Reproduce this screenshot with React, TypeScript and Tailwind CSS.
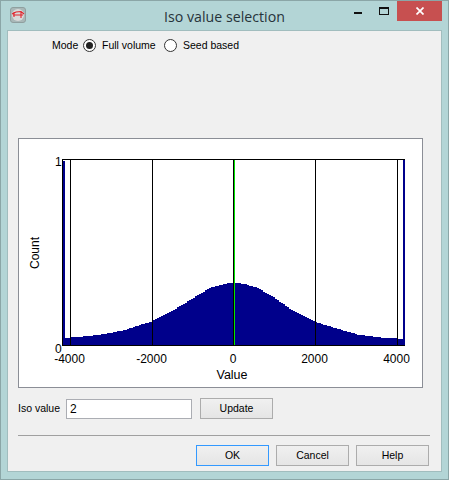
import React from 'react';

const table: [number, number][] = [
  [64, 7], [70, 7.5], [90, 9], [110, 12], [125, 15], [143, 21], [152, 23.5], [177, 37], [195, 48], [210, 57], [227, 61.5], [234, 62.5], [245, 61], [258, 57], [275, 47], [292, 35], [315, 23], [342, 15], [358, 10.5], [382, 7.5], [405, 6],
];

function heightAt(x: number): number {
  for (let i = 0; i < table.length - 1; i++) {
    const [a, ha] = table[i];
    const [b, hb] = table[i + 1];
    if (x >= a && x <= b) return ha + ((hb - ha) * (x - a)) / (b - a);
  }
  return 6;
}

function histPath(): string {
  const base = 345;
  let d = `M65 ${base}`;
  for (let x = 65; x < 405; x += 2) {
    const y = Math.round(base - heightAt(x + 1));
    d += ` L${x} ${y} L${x + 2} ${y}`;
  }
  return d + ` L405 ${base} Z`;
}

function Radio({ checked }: { checked?: boolean }) {
  return (
    <span className="w-[13px] h-[13px] rounded-full border border-[#333] bg-white flex items-center justify-center shrink-0">
      {checked && <span className="w-[7px] h-[7px] rounded-full bg-[#222]" />}
    </span>
  );
}

function Btn({ label, focus }: { label: string; focus?: boolean }) {
  return (
    <button
      className={`w-[73px] h-[21px] text-[10.5px] text-black bg-gradient-to-b from-[#f0f0f0] to-[#e5e5e5] border flex items-center justify-center ${focus ? 'border-[#3399ff]' : 'border-[#acacac]'}`}
    >
      {label}
    </button>
  );
}

function Chart() {
  const grid = [62, 70, 152, 233, 315, 397];
  const labels: [number, string][] = [[69.5, '-4000'], [151.5, '-2000'], [233, '0'], [314.5, '2000'], [396.5, '4000']];
  return (
    <svg className="block w-[403px] h-[248px]" viewBox="19 139 403 248" fontFamily="'Liberation Sans', Arial, sans-serif" fontSize="12" fill="#000">
      <g shapeRendering="crispEdges">
        <path d={histPath()} fill="#00008b" />
        <rect x="63" y="161" width="2" height="185" fill="#00008b" />
        <rect x="403" y="160" width="2" height="186" fill="#00008b" />
        {grid.map((x) => (
          <rect key={x} x={x} y="159" width="1" height="187" fill="#000" />
        ))}
        <rect x="234" y="160" width="1" height="185" fill="#00e600" />
        <rect x="62" y="159" width="343" height="1" fill="#000" />
        <rect x="62" y="345" width="343" height="1" fill="#000" />
      </g>
      <text x="55" y="166">1</text>
      <text x="55" y="353">0</text>
      {labels.map(([x, t]) => (
        <text key={t} x={x} y="363" textAnchor="middle">{t}</text>
      ))}
      <text x="232" y="379" textAnchor="middle" fontSize="12.5">Value</text>
      <text x="39" y="253" textAnchor="middle" transform="rotate(-90 39 253)">Count</text>
    </svg>
  );
}

export default function App() {
  return (
    <div className="w-[449px] h-[480px] bg-[#b3d5d6] border border-[#8ba6a7] flex flex-col font-['Liberation_Sans',Arial,sans-serif] text-[10.5px] text-black overflow-hidden">
      <div className="h-[29px] shrink-0 grid grid-cols-[1fr_auto_1fr]">
        <div className="flex pl-[9px] pt-[6px]">
          <svg width="16" height="16" viewBox="0 0 16 16">
            <rect x="0.5" y="0.5" width="15" height="15" rx="2.5" fill="#a9b8b8" stroke="#8f9f9f" />
            <circle cx="8" cy="8" r="6" fill="#d9d9d9" />
            <path d="M2 7 L6 5 L11 4.5 L14 7 M4 5 V10 M11 5 V11 M3 8 H13" fill="none" stroke="#e0242c" strokeWidth="1.1" />
          </svg>
        </div>
        <div className="font-['Open_Sans',sans-serif] text-[14.2px] text-[#27333a] leading-[20px] pt-[6px]">Iso value selection</div>
        <div className="flex justify-end pr-[6px]">
          <div className="flex items-start">
            <div className="w-[27px] h-[20px] flex items-center justify-center">
              <span className="w-[8px] h-[2px] mt-[4px] bg-[#111]" />
            </div>
            <div className="w-[26px] h-[20px] flex items-center justify-center">
              <span className="w-[10px] h-[8px] border border-[#111] border-t-2" />
            </div>
            <div className="w-[45px] h-[20px] bg-[#c75050] flex items-center justify-center">
              <svg width="8" height="8" viewBox="0 0 8 8">
                <path d="M0.5 0.5 L7.5 7.5 M7.5 0.5 L0.5 7.5" stroke="#fff" strokeWidth="1.7" />
              </svg>
            </div>
          </div>
        </div>
      </div>
      <div className="mx-[6px] h-[442px] shrink-0 bg-[#f0f0f0] border border-[#a1bdbe]">
        <div className="flex items-center h-[13px] mt-[8px] ml-[44px]">
          <span className="w-[31px]">Mode</span>
          <Radio checked />
          <span className="ml-[6px] w-[62px]">Full volume</span>
          <Radio />
          <span className="ml-[6px]">Seed based</span>
        </div>
        <div className="ml-[10px] mt-[86px] w-[405px] h-[250px] bg-white border border-[#8b8e96]">
          <Chart />
        </div>
        <div className="flex items-center ml-[10px] mt-[10px] h-[21px]">
          <span className="w-[48px]">Iso value</span>
          <div className="w-[126px] h-[20px] bg-white border border-[#abadb3] text-[12px] pl-[3px] leading-[18px]">2</div>
          <span className="ml-[8px]"><Btn label="Update" /></span>
        </div>
        <div className="ml-[10px] w-[412px] h-px bg-[#a0a0a0] mt-[16px]" />
        <div className="flex justify-end gap-[7px] pr-[12px] mt-[9px]">
          <Btn label="OK" focus />
          <Btn label="Cancel" />
          <Btn label="Help" />
        </div>
      </div>
    </div>
  );
}
